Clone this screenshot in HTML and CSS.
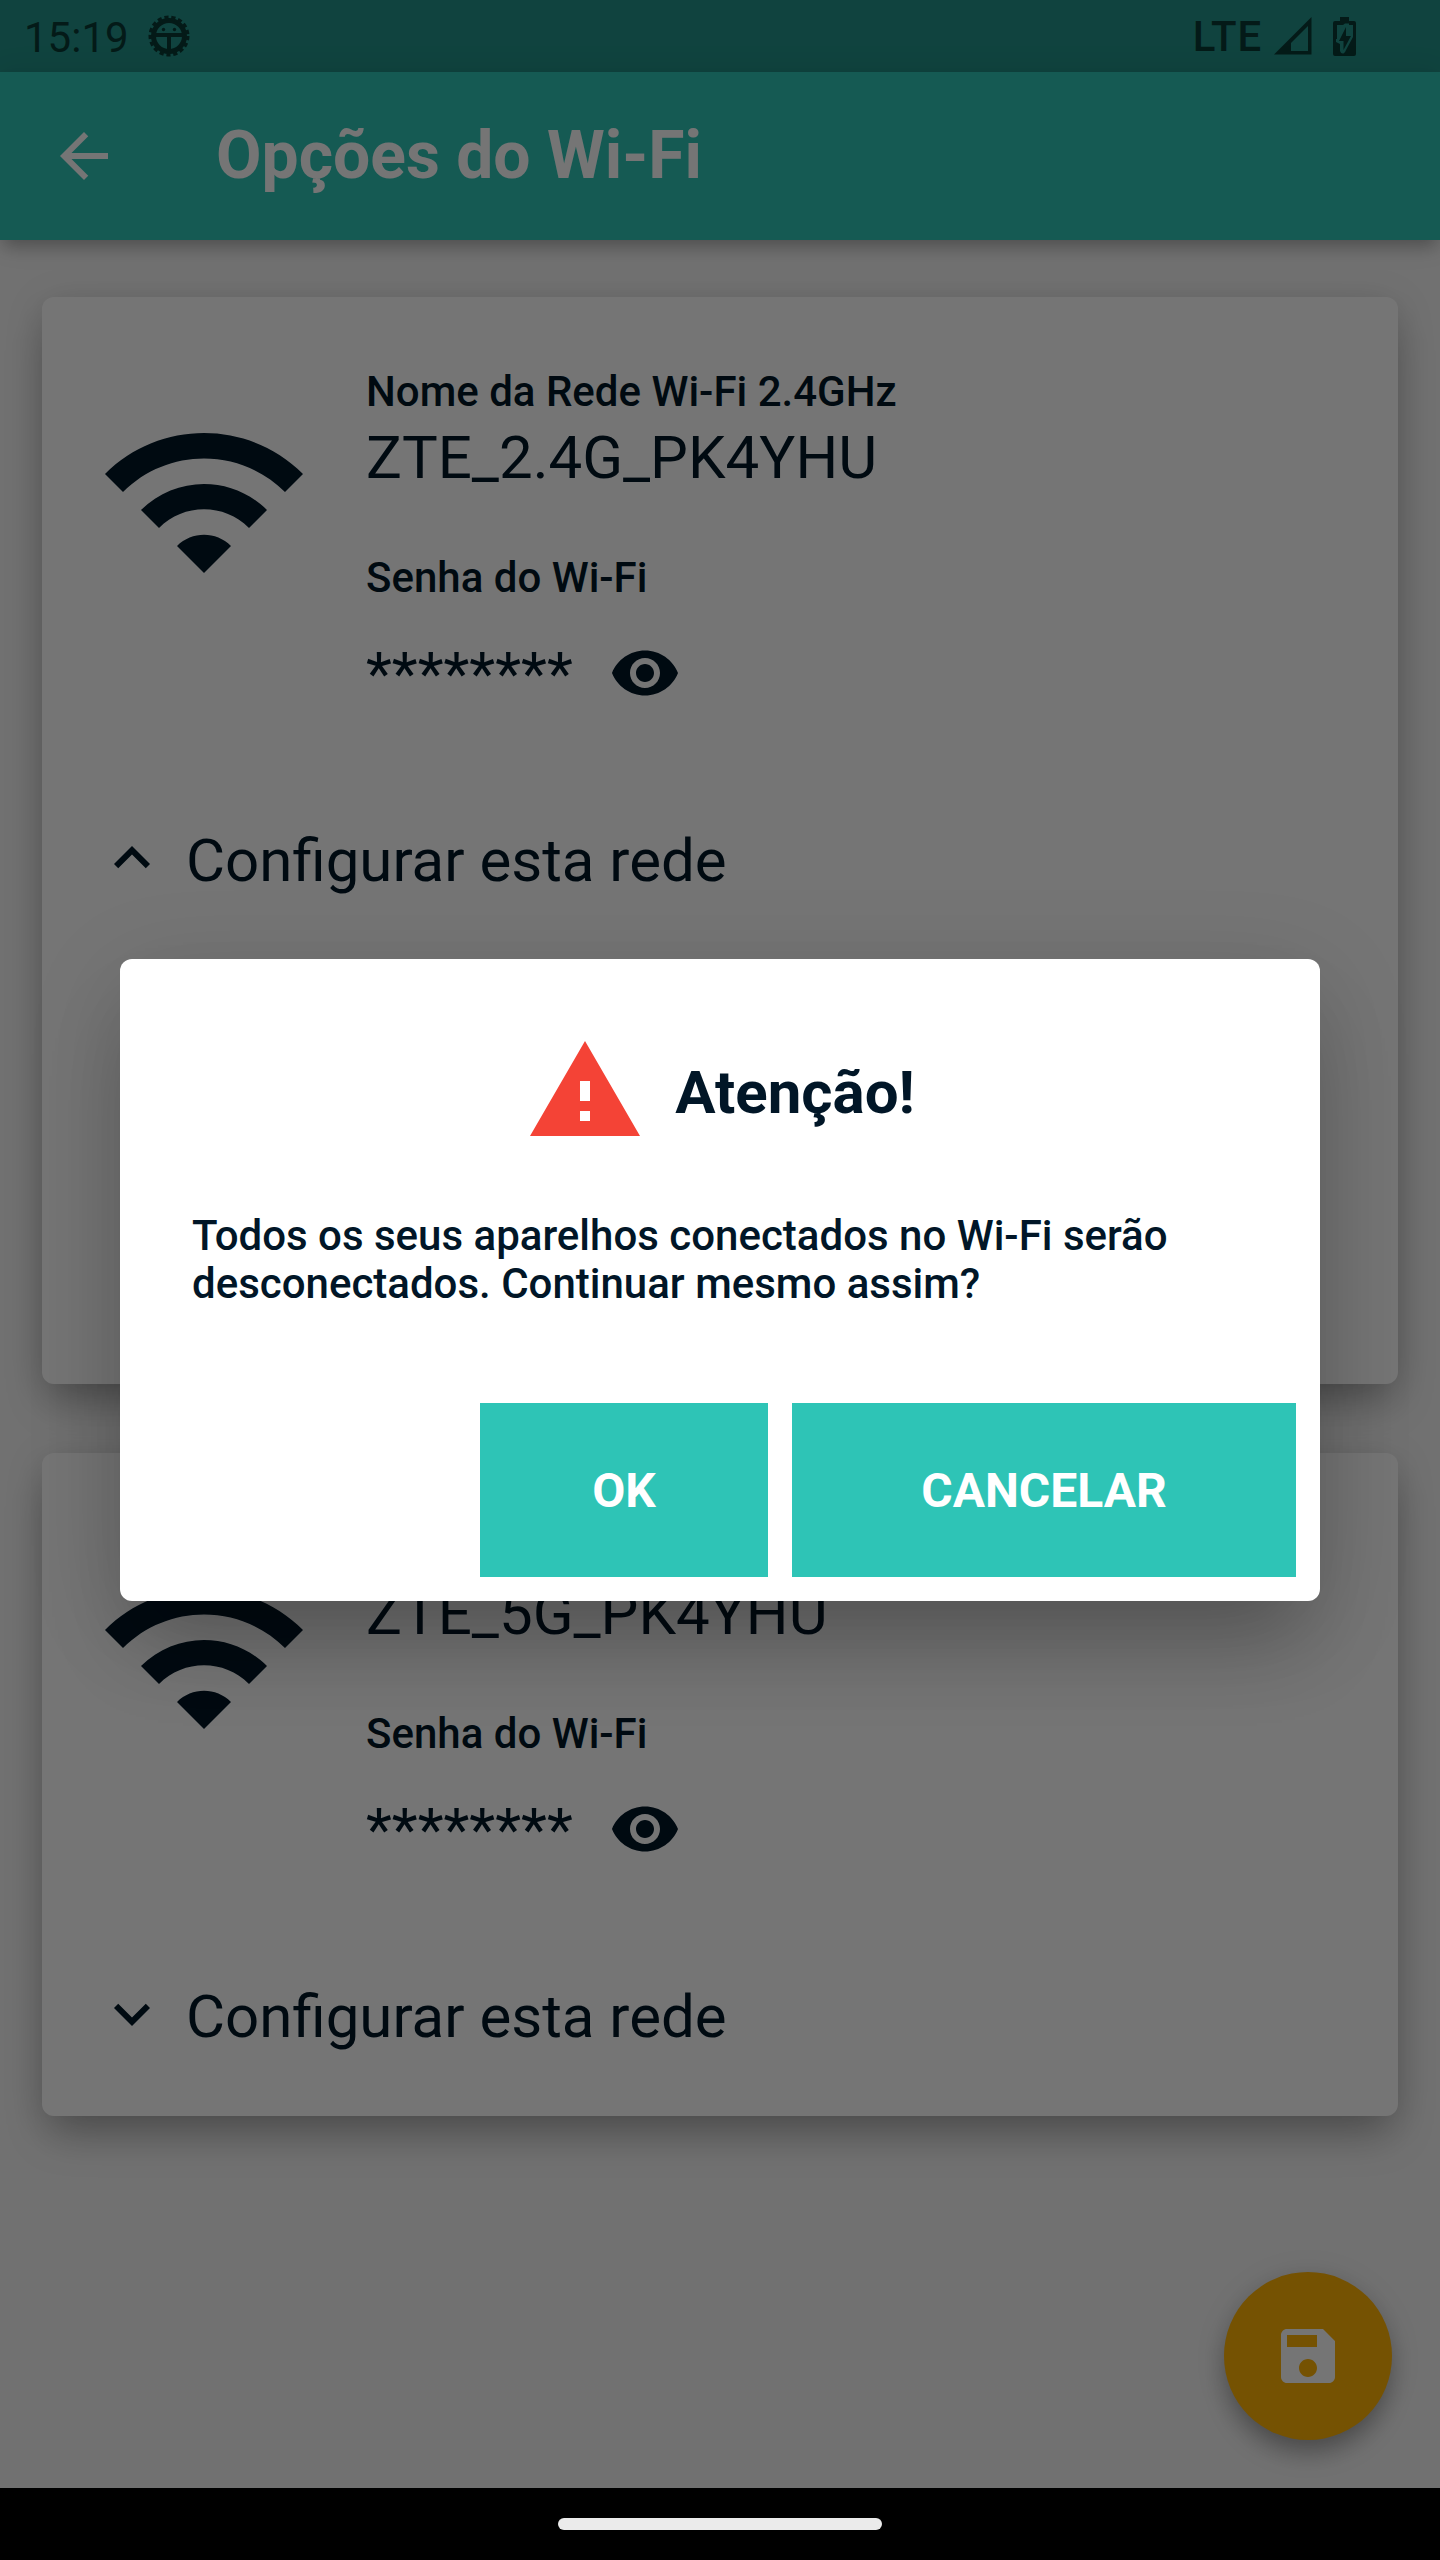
FILE: index.html
```html
<!DOCTYPE html>
<html lang="pt-BR">
<head>
<meta charset="utf-8">
<title>Opções do Wi-Fi</title>
<link rel="stylesheet" href="styles.css">
</head>
<body>
<svg class="sprites" aria-hidden="true">
  <symbol id="wifi" viewBox="0 0 24 24"><path d="M1 9l2 2c4.97-4.97 13.03-4.97 18 0l2-2C16.93 2.93 7.08 2.93 1 9zm8 8l3 3 3-3c-1.65-1.66-4.34-1.66-6 0zm-4-4l2 2c2.76-2.76 7.24-2.76 10 0l2-2C15.14 9.14 8.87 9.14 5 13z"/></symbol>
  <symbol id="eye" viewBox="0 0 24 24"><path d="M12 4.5C7 4.5 2.73 7.61 1 12c1.73 4.39 6 7.5 11 7.5s9.270-3.110 11-7.500c-1.730-4.390-6-7.500-11-7.500zM12 17c-2.760 0-5-2.240-5-5s2.240-5 5-5 5 2.240 5 5-2.240 5-5 5zm0-8c-1.660 0-3 1.340-3 3s1.340 3 3 3 3-1.340 3-3-1.340-3-3-3z"/></symbol>
</svg>
<div class="screen">
  <header class="status-bar">
    <span class="clock">15:19</span>
    <svg class="debug-icon" viewBox="-21 -21 42 42">
      <circle r="15.500" fill="none" stroke="currentColor" stroke-width="5"/>
      <circle r="18" fill="none" stroke="currentColor" stroke-width="5" stroke-dasharray="4 2.653"/>
      <path d="M-15-3H15V1H2V15H-2V1H-15z"/>
      <circle cx="-5.500" cy="-6.500" r="1.700"/><circle cx="5.500" cy="-6.500" r="1.700"/>
    </svg>
    <span class="network">LTE</span>
    <svg class="signal-icon" viewBox="0 0 38 38"><path fill-rule="evenodd" d="M37.500 0V37.500H0zM34 9L17 26V34H34z"/></svg>
    <svg class="battery-icon" viewBox="0 0 23 39">
      <path fill-rule="evenodd" d="M7 0H16V4H21Q23 4 23 6V37Q23 39 21 39H2Q0 39 0 37V6Q0 4 2 4H7zM4 8V22H3V25L7 27V34Q8 37 10.500 36.500Q12 36 13 33L20 20V8H16V6.500H12L10 8z"/>
      <path d="M13 10L6 24H10.500V33L18 19H13z"/>
    </svg>
  </header>
  <div class="app-bar">
    <svg class="icon" viewBox="0 0 24 24"><path d="M20 11H7.830l5.590-5.590L12 4l-8 8 8 8 1.410-1.410L7.830 13H20v-2z"/></svg>
    <h1 class="title">Opções do Wi-Fi</h1>
  </div>
  <main class="content">
    <section class="card card-open">
      <div class="network-row">
        <svg class="wifi-icon"><use href="#wifi"/></svg>
        <div class="details">
          <div class="label">Nome da Rede Wi-Fi 2.4GHz</div>
          <div class="ssid">ZTE_2.4G_PK4YHU</div>
          <div class="label">Senha do Wi-Fi</div>
          <div class="password"><span class="mask">********</span><svg class="icon"><use href="#eye"/></svg></div>
        </div>
      </div>
      <div class="configure">
        <svg class="icon" viewBox="0 0 24 24"><path d="M12 8l-6 6 1.410 1.410L12 10.830l4.590 4.580L18 14z"/></svg>
        <span class="configure-text">Configurar esta rede</span>
      </div>
    </section>
    <section class="card">
      <div class="network-row">
        <svg class="wifi-icon"><use href="#wifi"/></svg>
        <div class="details">
          <div class="label">Nome da Rede Wi-Fi 5GHz</div>
          <div class="ssid">ZTE_5G_PK4YHU</div>
          <div class="label">Senha do Wi-Fi</div>
          <div class="password"><span class="mask">********</span><svg class="icon"><use href="#eye"/></svg></div>
        </div>
      </div>
      <div class="configure">
        <svg class="icon" viewBox="0 0 24 24"><path d="M16.590 8.590L12 13.170 7.410 8.590 6 10l6 6 6-6z"/></svg>
        <span class="configure-text">Configurar esta rede</span>
      </div>
    </section>
  </main>
  <div class="fab">
    <svg class="icon" viewBox="0 0 24 24"><path d="M17 3H5c-1.110 0-2 .9-2 2v14c0 1.100.890 2 2 2h14c1.100 0 2-.9 2-2V7l-4-4zm-5 16c-1.660 0-3-1.340-3-3s1.340-3 3-3 3 1.340 3 3-1.340 3-3 3zm3-10H5V5h10v4z"/></svg>
  </div>
  <div class="scrim">
    <div class="dialog" role="alertdialog">
      <div class="dialog-head">
        <svg class="warning-icon" viewBox="0 0 24 24"><path d="M1 21h22L12 2 1 21zm12-3h-2v-2h2v2zm0-4h-2v-4h2v4z"/></svg>
        <h2 class="dialog-title">Atenção!</h2>
      </div>
      <p class="message">Todos os seus aparelhos conectados no Wi-Fi serão desconectados. Continuar mesmo assim?</p>
      <div class="actions">
        <button class="button ok">OK</button>
        <button class="button cancel">CANCELAR</button>
      </div>
    </div>
  </div>
  <footer class="nav-bar"><div class="pill"></div></footer>
</div>
</body>
</html>
```
FILE: styles.css
```css
* { box-sizing: border-box; }
body { margin: 0; font-family: Roboto, sans-serif; color: #011627; }
h1, h2, p { margin: 0; }
svg { display: block; flex: none; fill: currentColor; }
.sprites { position: absolute; width: 0; height: 0; }

.screen {
  position: relative;
  display: flex;
  flex-direction: column;
  width: 1440px;
  height: 2560px;
  overflow: hidden;
  background: #f6f6f6;
}
.icon { width: 72px; height: 72px; }

.status-bar {
  display: flex;
  align-items: center;
  height: 72px;
  padding: 0 84px 0 24px;
  background: #239389;
  color: #093a35;
}
.clock { width: 124px; font-size: 42px; line-height: 70px; padding-top: 4px; }
.debug-icon { width: 42px; height: 42px; }
.network { margin-left: auto; font-size: 42px; font-weight: 500; line-height: 70px; letter-spacing: .8px; padding-top: 1px; }
.signal-icon { width: 38px; height: 38px; margin-left: 12px; }
.battery-icon { width: 23px; height: 39px; margin-left: 21px; }

.app-bar {
  position: relative;
  z-index: 1;
  display: flex;
  align-items: center;
  height: 168px;
  padding: 0 48px;
  gap: 96px;
  background: #2ec4b6;
  color: #fff;
  box-shadow: 0 10px 16px -4px rgba(0, 0, 0, .26), 0 2px 30px rgba(0, 0, 0, .1);
}
.title { font-size: 66px; font-weight: 700; line-height: 78px; margin-top: -1px; }

.content {
  flex: 1;
  display: flex;
  flex-direction: column;
  gap: 69px;
  padding: 57px 42px 0;
}
.card {
  height: 663px;
  padding: 70px 54px 0;
  border-radius: 12px;
  background: #fff;
  box-shadow: 0 24px 44px -8px rgba(0, 0, 0, .28), 0 6px 40px rgba(0, 0, 0, .12);
}
.card-open { height: 1087px; }
.network-row { display: flex; gap: 54px; height: 455px; }
.wifi-icon { width: 216px; height: 216px; margin-top: 26px; }
.label { font-size: 42px; font-weight: 500; line-height: 49px; }
.ssid { margin: 7px 0 60px; font-size: 60px; line-height: 70px; }
.password { display: flex; align-items: center; gap: 36px; margin-top: 35px; }
.mask { font-size: 60px; line-height: 70px; padding-top: 1px; }
.configure { display: flex; align-items: center; gap: 18px; }
.configure .icon { margin-bottom: 2px; }
.configure-text { font-size: 60px; line-height: 70px; padding-top: 4px; }

.fab {
  position: absolute;
  right: 48px;
  bottom: 120px;
  display: grid;
  place-items: center;
  width: 168px;
  height: 168px;
  border-radius: 50%;
  background: #ffb205;
  color: #fff;
  box-shadow: 0 16px 26px -4px rgba(0, 0, 0, .28), 0 4px 30px rgba(0, 0, 0, .14);
}

.scrim {
  position: absolute;
  inset: 0 0 72px;
  z-index: 2;
  display: grid;
  place-items: center;
  padding-top: 72px;
  background: rgba(0, 0, 0, .54);
}
.dialog {
  width: 1200px;
  height: 642px;
  padding: 72px 24px 24px;
  border-radius: 12px;
  background: #fff;
  box-shadow: 0 54px 80px -16px rgba(0, 0, 0, .22), 0 20px 100px rgba(0, 0, 0, .12);
}
.dialog-head { display: flex; align-items: center; justify-content: center; gap: 30px; height: 120px; }
.warning-icon { width: 120px; height: 120px; color: #f44336; }
.dialog-title { font-size: 60px; font-weight: 700; line-height: 70px; padding-top: 4px; }
.message { height: 96px; margin: 61px 48px 95px; font-size: 42px; font-weight: 500; line-height: 48px; }
.actions { display: flex; justify-content: flex-end; gap: 24px; }
.button {
  height: 174px;
  padding: 2px 0 0;
  border: 0;
  background: #2ec4b6;
  color: #fff;
  font: 700 48px/56px Roboto, sans-serif;
}
.ok { width: 288px; }
.cancel { width: 504px; }

.nav-bar {
  display: grid;
  place-items: center;
  flex: none;
  height: 72px;
  background: #000;
}
.pill { width: 324px; height: 12px; border-radius: 6px; background: #ebebeb; }
```
